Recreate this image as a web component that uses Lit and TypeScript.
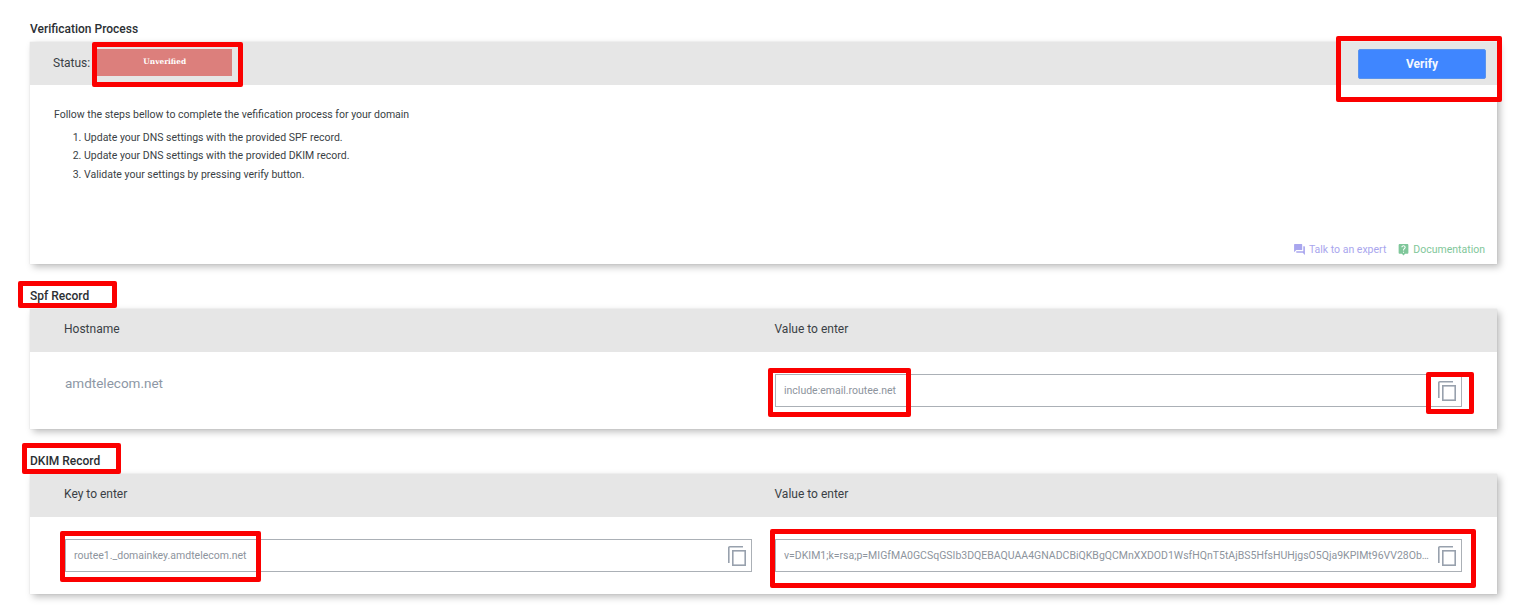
import { LitElement, html, css, svg } from "lit";
import { customElement } from "lit/decorators.js";

const DKIM_VALUE =
  "v=DKIM1;k=rsa;p=MIGfMA0GCSqGSIb3DQEBAQUAA4GNADCBiQKBgQCMnXXDOD1WsfHQnT5tAjBS5HfsHUHjgsO5Qja9KPIMt96VV28ObXkT3mQ2pLw8RfYc";

const MARKS = [
  { x: 92, y: 42, w: 151, h: 45 },
  { x: 1336, y: 36, w: 166, h: 66 },
  { x: 18, y: 281, w: 99, h: 27 },
  { x: 768, y: 368, w: 143, h: 49 },
  { x: 1426, y: 372, w: 48, h: 42 },
  { x: 22, y: 443, w: 99, h: 31 },
  { x: 60, y: 531, w: 201, h: 51 },
  { x: 770, y: 529, w: 706, h: 59 },
];

const copyIcon = svg`<svg class="copy" width="18" height="20" viewBox="0 0 18 20" fill="none" stroke="#98a1ad" stroke-width="1.6"><path d="M.8 17V1.8a1 1 0 0 1 1-1H15"/><rect x="4.8" y="4.8" width="12.4" height="14.4"/></svg>`;

@customElement("app-root")
export class AppRoot extends LitElement {
  static styles = css`
    :host {
      display: block;
      position: relative;
      height: 615px;
      overflow: hidden;
      background: #fff;
      padding: 20px 24px 0 30px;
      box-sizing: border-box;
      font-family: Roboto, "Liberation Sans", sans-serif;
      color: #3a3f45;
    }
    .title {
      height: 22px;
      font-size: 12px;
      font-weight: 500;
      line-height: 18px;
      color: #2b2f33;
    }
    .section + .section {
      margin-top: 23px;
    }
    .card {
      background: #fff;
      box-shadow: 3px 3px 7px rgba(0, 0, 0, 0.26), 0 0 1px rgba(0, 0, 0, 0.15);
    }
    .head {
      height: 43px;
      background: #e6e6e6;
      display: flex;
      align-items: center;
    }
    .status-head {
      padding: 0 11px 0 23px;
      justify-content: space-between;
    }
    .status {
      display: flex;
      align-items: center;
      gap: 7px;
      font-size: 12px;
      padding-bottom: 2px;
    }
    .badge {
      width: 135px;
      height: 27px;
      padding-bottom: 3px;
      box-sizing: border-box;
      background: #dc7f7c;
      color: #fff;
      font-family: "DejaVu Serif", "Liberation Serif", serif;
      font-size: 7.4px;
      font-weight: 700;
      display: flex;
      align-items: center;
      justify-content: center;
    }
    .verify {
      width: 128px;
      height: 30px;
      margin-top: 1px;
      border: 1px solid #5a94ee;
      border-radius: 2px;
      background: #3f86ff;
      color: #f4f8ff;
      font: 700 12px Roboto, "Liberation Sans", sans-serif;
    }
    .process {
      height: 179px;
      box-sizing: border-box;
      padding: 22px 12px 0 24px;
      font-size: 10.5px;
      display: flex;
      flex-direction: column;
    }
    .process p {
      margin: 0;
      line-height: 16px;
    }
    .process ol {
      margin: 6px 0 0;
      padding: 0 0 0 30px;
      line-height: 18.3px;
    }
    .links {
      margin-top: auto;
      height: 22px;
      display: flex;
      justify-content: flex-end;
      gap: 11px;
    }
    .link {
      display: flex;
      align-items: flex-start;
      gap: 3px;
      line-height: 15px;
    }
    .link.talk {
      color: #a9a6ee;
    }
    .link.docs {
      color: #7fc79a;
    }
    .link svg {
      fill: currentColor;
      margin-top: 1px;
    }
    .grid {
      display: grid;
      grid-template-columns: repeat(2, minmax(0, 1fr));
      column-gap: 23px;
    }
    .grid.head {
      font-size: 12px;
      padding: 0 35px 3px 34px;
      box-sizing: border-box;
    }
    .grid.rows {
      height: 77px;
      box-sizing: border-box;
      padding: 22px 35px 0;
    }
    .host {
      font-size: 13.5px;
      line-height: 18px;
      color: #8d97a5;
    }
    .field {
      height: 33px;
      box-sizing: border-box;
      border: 1px solid #abb0b6;
      display: flex;
      align-items: center;
      padding: 0 5px 0 8px;
      gap: 7px;
      font-size: 10.5px;
      color: #8d949d;
    }
    .field span {
      flex: 1;
      min-width: 0;
      white-space: nowrap;
      overflow: hidden;
      text-overflow: ellipsis;
    }
    .copy {
      flex: none;
    }
    .mark {
      position: absolute;
      box-sizing: border-box;
      border: 5px solid #fb0000;
      border-radius: 2px;
      pointer-events: none;
    }
  `;

  private field(value: string) {
    return html`<div class="field"><span>${value}</span>${copyIcon}</div>`;
  }

  render() {
    return html`
      <section class="section">
        <div class="title">Verification Process</div>
        <div class="card">
          <div class="head status-head">
            <div class="status">Status: <div class="badge">Unverified</div></div>
            <button class="verify">Verify</button>
          </div>
          <div class="process">
            <p>Follow the steps bellow to complete the vefification process for your domain</p>
            <ol>
              <li>Update your DNS settings with the provided SPF record.</li>
              <li>Update your DNS settings with the provided DKIM record.</li>
              <li>Validate your settings by pressing verify button.</li>
            </ol>
            <div class="links">
              <div class="link talk">
                <svg width="13" height="13" viewBox="0 0 24 24"><path d="M21 6h-2v9H6v2c0 .55.45 1 1 1h11l4 4V7c0-.55-.45-1-1-1zm-4 6V3c0-.55-.45-1-1-1H3c-.55 0-1 .45-1 1v14l4-4h10c.55 0 1-.45 1-1z"/></svg>
                Talk to an expert
              </div>
              <div class="link docs">
                <svg width="13" height="13" viewBox="0 0 24 24"><path d="M19 2H5c-1.11 0-2 .9-2 2v14c0 1.1.89 2 2 2h4l3 3 3-3h4c1.1 0 2-.9 2-2V4c0-1.1-.9-2-2-2zm-6 16h-2v-2h2v2zm2.07-7.75l-.9.92C13.45 11.9 13 12.5 13 14h-2v-.5c0-1.1.45-2.1 1.17-2.83l1.24-1.26c.37-.36.59-.86.59-1.41 0-1.1-.9-2-2-2s-2 .9-2 2H8c0-2.21 1.79-4 4-4s4 1.79 4 4c0 .88-.36 1.68-.93 2.25z"/></svg>
                Documentation
              </div>
            </div>
          </div>
        </div>
      </section>
      <section class="section">
        <div class="title">Spf Record</div>
        <div class="card">
          <div class="head grid"><div>Hostname</div><div>Value to enter</div></div>
          <div class="grid rows">
            <div class="host">amdtelecom.net</div>
            ${this.field("include:email.routee.net")}
          </div>
        </div>
      </section>
      <section class="section">
        <div class="title">DKIM Record</div>
        <div class="card">
          <div class="head grid"><div>Key to enter</div><div>Value to enter</div></div>
          <div class="grid rows">
            ${this.field("routee1._domainkey.amdtelecom.net")}
            ${this.field(DKIM_VALUE)}
          </div>
        </div>
      </section>
      ${MARKS.map(
        (m) =>
          html`<div class="mark" style="left:${m.x}px;top:${m.y}px;width:${m.w}px;height:${m.h}px"></div>`
      )}
    `;
  }
}
